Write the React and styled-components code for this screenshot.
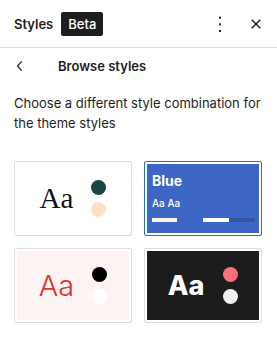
import React from "react";
import styled, { createGlobalStyle } from "styled-components";

const Global = createGlobalStyle`
  html, body { margin: 0; padding: 0; background: #fff; }
  body { font-family: Inter, "Noto Sans", sans-serif; color: #1e1e1e; -webkit-font-smoothing: antialiased; }
  * { box-sizing: border-box; }
`;

const Panel = styled.div`
  width: 277px;
  height: 360px;
  background: #fff;
  display: flex;
  flex-direction: column;
`;

const Header = styled.header`
  height: 48px;
  display: flex;
  align-items: center;
  padding: 0 9px 0 14px;
  border-bottom: 1px solid #e0e0e0;
`;

const Title = styled.h2`
  margin: 0;
  font-size: 13px;
  font-weight: 600;
  line-height: 24px;
`;

const Badge = styled.span`
  margin-left: 8px;
  height: 24px;
  padding: 0 7px;
  display: inline-flex;
  align-items: center;
  background: #1e1e1e;
  color: #fff;
  border-radius: 2px;
  font-size: 13px;
  font-weight: 500;
`;

const Spacer = styled.div`
  flex: 1;
`;

const IconButton = styled.button`
  width: 24px;
  height: 24px;
  padding: 0;
  border: 0;
  background: none;
  display: flex;
  align-items: center;
  justify-content: center;
  color: #1e1e1e;
  margin-left: ${(p) => p.$gap || 0}px;
  svg { display: block; fill: currentColor; }
`;

const Nav = styled.div`
  height: 36px;
  display: flex;
  align-items: center;
  padding-left: 10px;
`;

const BackButton = styled.button`
  width: 20px;
  height: 20px;
  padding: 0;
  border: 0;
  background: none;
  display: flex;
  color: #1e1e1e;
  svg { display: block; fill: currentColor; }
`;

const NavTitle = styled.h3`
  margin: 0 0 0 28px;
  font-size: 13px;
  font-weight: 600;
`;

const Description = styled.p`
  margin: 9px 0 0;
  padding: 0 14px;
  font-size: 13px;
  line-height: 20px;
  color: #1e1e1e;
`;

const Grid = styled.div`
  margin-top: 28px;
  padding: 0 15px 0 14px;
  display: grid;
  grid-template-columns: 118px 118px;
  column-gap: 12px;
  row-gap: 12px;
`;

const Card = styled.div`
  border: 1px solid ${(p) => (p.$selected ? "#2271b1" : "#dddddd")};
  border-radius: 2px;
  padding: 2px;
  background: #fff;
`;

const Preview = styled.div`
  height: 69px;
  background: ${(p) => p.$bg};
  display: flex;
  align-items: center;
  justify-content: center;
  gap: ${(p) => p.$gap || 18}px;
`;

const Sample = styled.span`
  font-family: ${(p) => p.$font};
  font-size: ${(p) => p.$size}px;
  font-weight: ${(p) => p.$weight};
  color: ${(p) => p.$color};
  line-height: 1;
  letter-spacing: ${(p) => p.$ls || 0}px;
`;

const Dots = styled.div`
  display: flex;
  flex-direction: column;
  gap: 7px;
`;

const Dot = styled.span`
  width: 15px;
  height: 15px;
  border-radius: 50%;
  background: ${(p) => p.$color};
`;

const BluePreview = styled.div`
  height: 69px;
  background: #3e66c5;
  display: flex;
  flex-direction: column;
  padding: 9px 4px 0 5px;
  color: #fff;
`;

const BlueTitle = styled.div`
  font-size: 14px;
  font-weight: 700;
  line-height: 16px;
`;

const BlueSub = styled.div`
  margin-top: 8px;
  font-size: 10px;
  line-height: 12px;
  font-weight: 500;
`;

const Bars = styled.div`
  margin-top: 9px;
  display: flex;
  justify-content: space-between;
`;

const Bar = styled.div`
  width: ${(p) => p.$w}px;
  height: 4px;
  background: ${(p) => p.$bg};
  display: flex;
`;

const BarFill = styled.div`
  height: 100%;
  background: #fff;
`;

const MoreIcon = () => (
  <svg width="24" height="24" viewBox="0 0 24 24">
    <rect x="11" y="4.7" width="2" height="2" />
    <rect x="11" y="11.3" width="2" height="2" />
    <rect x="11" y="18" width="2" height="2" />
  </svg>
);

const CloseIcon = () => (
  <svg width="24" height="24" viewBox="0 0 24 24">
    <path d="M12 13.06l3.712 3.713 1.061-1.06L13.061 12l3.712-3.712-1.06-1.06L12 10.938 8.288 7.227l-1.061 1.06L10.939 12l-3.712 3.712 1.06 1.061L12 13.061z" />
  </svg>
);

const ChevronLeft = () => (
  <svg width="20" height="20" viewBox="0 0 24 24">
    <path d="M14.6 7l-1.2-1L8 12l5.4 6 1.2-1-4.6-5z" />
  </svg>
);

const variations = [
  {
    bg: "#ffffff",
    font: '"Liberation Serif", serif',
    size: 29,
    weight: 400,
    color: "#111",
    dots: ["#1b4544", "#fde0c4"],
  },
  { blue: true },
  {
    bg: "#fdf3f3",
    font: 'Inter, "Noto Sans", sans-serif',
    size: 29,
    weight: 300,
    color: "#d8352b",
    dots: ["#000000", "#ffffff"],
  },
  {
    bg: "#1c1c1c",
    font: 'Inter, "Noto Sans", sans-serif',
    size: 27,
    weight: 800,
    color: "#ffffff",
    dots: ["#f7707a", "#f0f0ee"],
    gap: 19,
  },
];

export default function App() {
  return (
    <>
      <Global />
      <Panel>
        <Header>
          <Title>Styles</Title>
          <Badge>Beta</Badge>
          <Spacer />
          <IconButton aria-label="Options">
            <MoreIcon />
          </IconButton>
          <IconButton aria-label="Close" $gap={12}>
            <CloseIcon />
          </IconButton>
        </Header>
        <Nav>
          <BackButton aria-label="Back">
            <ChevronLeft />
          </BackButton>
          <NavTitle>Browse styles</NavTitle>
        </Nav>
        <Description>
          Choose a different style combination for the theme styles
        </Description>
        <Grid>
          {variations.map((v, i) =>
            v.blue ? (
              <Card key={i} $selected>
                <BluePreview>
                  <BlueTitle>Blue</BlueTitle>
                  <BlueSub>Aa Aa</BlueSub>
                  <Bars>
                    <Bar $w={25} $bg="#fbf1ea" />
                    <Bar $w={52} $bg="#3455a4">
                      <BarFill style={{ width: "50%" }} />
                    </Bar>
                  </Bars>
                </BluePreview>
              </Card>
            ) : (
              <Card key={i}>
                <Preview $bg={v.bg} $gap={v.gap}>
                  <Sample
                    $font={v.font}
                    $size={v.size}
                    $weight={v.weight}
                    $color={v.color}
                  >
                    Aa
                  </Sample>
                  <Dots>
                    {v.dots.map((c, j) => (
                      <Dot key={j} $color={c} />
                    ))}
                  </Dots>
                </Preview>
              </Card>
            )
          )}
        </Grid>
      </Panel>
    </>
  );
}
